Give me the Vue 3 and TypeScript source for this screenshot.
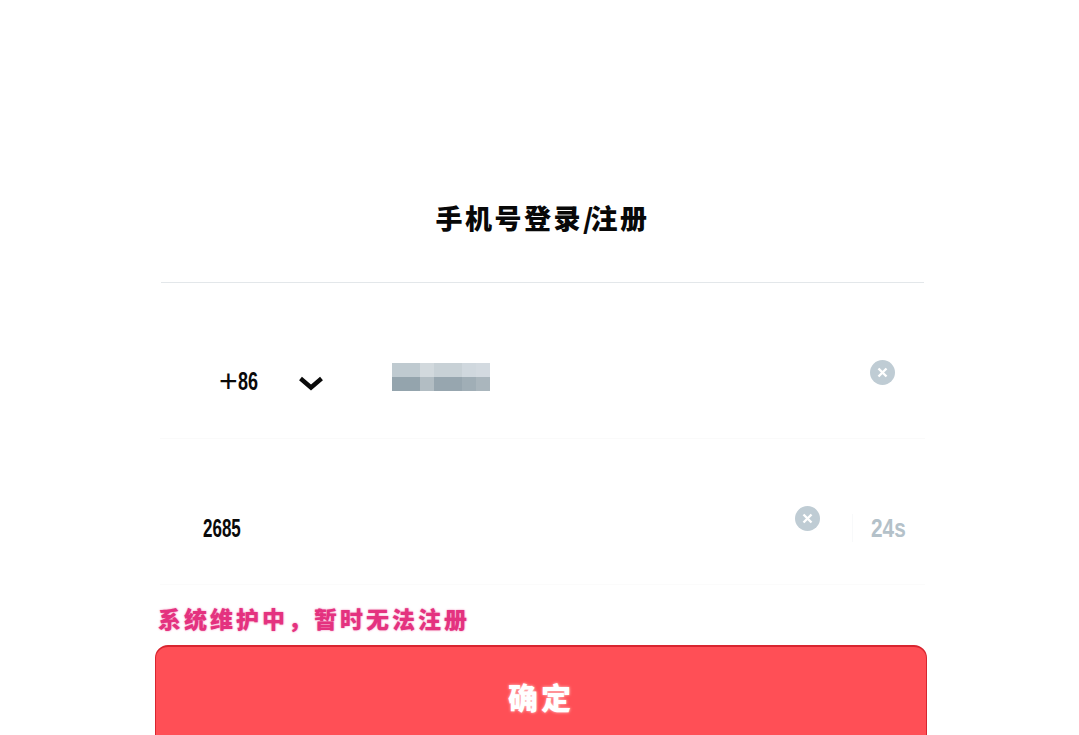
<script setup lang="ts">
interface Cell { width: number; top: string; bottom: string }
const cells: Cell[] = [
  { width: 28, top: '#bfcad0', bottom: '#94a4ad' },
  { width: 14, top: '#d2d9dd', bottom: '#b2bdc3' },
  { width: 28, top: '#c8d1d6', bottom: '#97a6af' },
  { width: 14, top: '#d0d8de', bottom: '#a0aeb6' },
  { width: 14, top: '#d3dae0', bottom: '#aab6bd' },
]
</script>

<template>
  <div class="page">
    <main class="panel">
      <h1 class="title">手机号登录<span class="slash">/</span>注册</h1>
      <div class="row phone-row">
        <span class="code"><span class="plus">+</span><span class="digits">86</span></span>
        <svg class="chevron" width="24" height="15" viewBox="0 0 24 15" aria-hidden="true">
          <polyline points="1.5,2.5 12,11.5 22.5,2.5" />
        </svg>
        <div class="masked" aria-hidden="true">
          <div v-for="(cell, i) in cells" :key="i" class="cell" :style="{ width: cell.width + 'px' }">
            <span :style="{ background: cell.top }"></span>
            <span :style="{ background: cell.bottom }"></span>
          </div>
        </div>
        <svg class="clear clear-phone" width="25" height="25" viewBox="0 0 25 25" aria-hidden="true">
          <circle cx="12.5" cy="12.5" r="12.5" />
          <path d="M8.5 8.5l8 8M16.5 8.5l-8 8" />
        </svg>
      </div>
      <div class="row code-row">
        <span class="sms">2685</span>
        <svg class="clear clear-code" width="25" height="25" viewBox="0 0 25 25" aria-hidden="true">
          <circle cx="12.5" cy="12.5" r="12.5" />
          <path d="M8.5 8.5l8 8M16.5 8.5l-8 8" />
        </svg>
        <span class="divider" aria-hidden="true"></span>
        <span class="timer">24s</span>
      </div>
      <p class="error">系统维护中，暂时无法注册</p>
      <button class="confirm" type="button">确定</button>
    </main>
  </div>
</template>

<style scoped>
.page {
  width: 1079px;
  height: 735px;
  overflow: hidden;
  background: #fff;
  font-family: "Liberation Sans", "Noto Sans CJK SC", sans-serif;
}
.panel {
  width: 772px;
  margin-left: 155px;
  display: flex;
  flex-direction: column;
}
.title {
  margin: 0 0 0 6px;
  width: 763px;
  box-sizing: border-box;
  padding: 200px 0 46px;
  height: 283px;
  border-bottom: 1px solid #e3e7ea;
  font-family: "Noto Sans CJK SC", sans-serif;
  font-size: 27px;
  line-height: 36px;
  font-weight: 900;
  letter-spacing: 2.5px;
  text-align: center;
  color: #080808;
}
.slash {
  letter-spacing: -3px;
  margin-right: 0;
}
.row {
  display: flex;
  align-items: center;
  box-sizing: border-box;
  margin: 0 2px 0 5px;
}
.phone-row {
  height: 156px;
  padding: 33px 0 0 59px;
  border-bottom: 1px solid #fafafa;
}
.code-row {
  height: 146px;
  padding: 32px 0 0 43px;
  border-bottom: 1px solid #fbfbfb;
}
.code {
  display: flex;
  align-items: center;
  width: 38px;
  margin: 8px 42px 0 0;
  line-height: 28px;
  color: #0a0a0a;
  white-space: nowrap;
}
.plus {
  width: 19px;
  font-size: 32px;
  line-height: 28px;
}
.digits {
  font-size: 25px;
  font-weight: 700;
  transform: scaleX(0.72);
  transform-origin: left center;
}
.chevron {
  margin: 13px 69px 0 0;
  flex: none;
}
.chevron polyline {
  fill: none;
  stroke: #0a0a0a;
  stroke-width: 4.4;
}
.masked {
  display: flex;
  height: 28px;
  flex: none;
}
.cell {
  display: flex;
  flex-direction: column;
}
.cell span {
  flex: 1;
}
.clear {
  flex: none;
}
.clear circle {
  fill: #bfccd4;
}
.clear path {
  fill: none;
  stroke: #fff;
  stroke-width: 2.4;
}
.clear-phone {
  margin: 0 30px 10px auto;
}
.clear-code {
  margin: 0 0 18px auto;
}
.sms {
  width: 38px;
  font-size: 25px;
  line-height: 28px;
  font-weight: 700;
  color: #0a0a0a;
  white-space: nowrap;
  transform: scaleX(0.68);
  transform-origin: left center;
}
.divider {
  flex: none;
  width: 1px;
  height: 28px;
  margin: 0 18px 0 32px;
  background: #f8f9fa;
}
.timer {
  width: 35px;
  margin-right: 19px;
  font-size: 26px;
  line-height: 28px;
  color: #b4c1c9;
  font-weight: 700;
  white-space: nowrap;
  transform: scaleX(0.8);
  transform-origin: left center;
}
.error {
  margin: 16px 0 0 3px;
  height: 45px;
  font-family: "Noto Sans CJK SC", sans-serif;
  font-size: 23px;
  line-height: 34px;
  font-weight: 900;
  letter-spacing: 3px;
  color: #e4327f;
  white-space: nowrap;
  box-sizing: border-box;
  text-shadow: 0 0 2px #f07ab0;
}
.confirm {
  flex: none;
  width: 772px;
  height: 130px;
  margin-top: -1px;
  padding: 0 0 30px;
  border: 1px solid #d8252f;
  border-top-width: 2px;
  border-radius: 13px;
  background: #ff4f56;
  color: #fff;
  font-family: "Noto Sans CJK SC", sans-serif;
  font-size: 30px;
  line-height: 36px;
  font-weight: 900;
  letter-spacing: 3px;
  text-shadow: 0 0 3px #ffd9d9;
}
</style>
